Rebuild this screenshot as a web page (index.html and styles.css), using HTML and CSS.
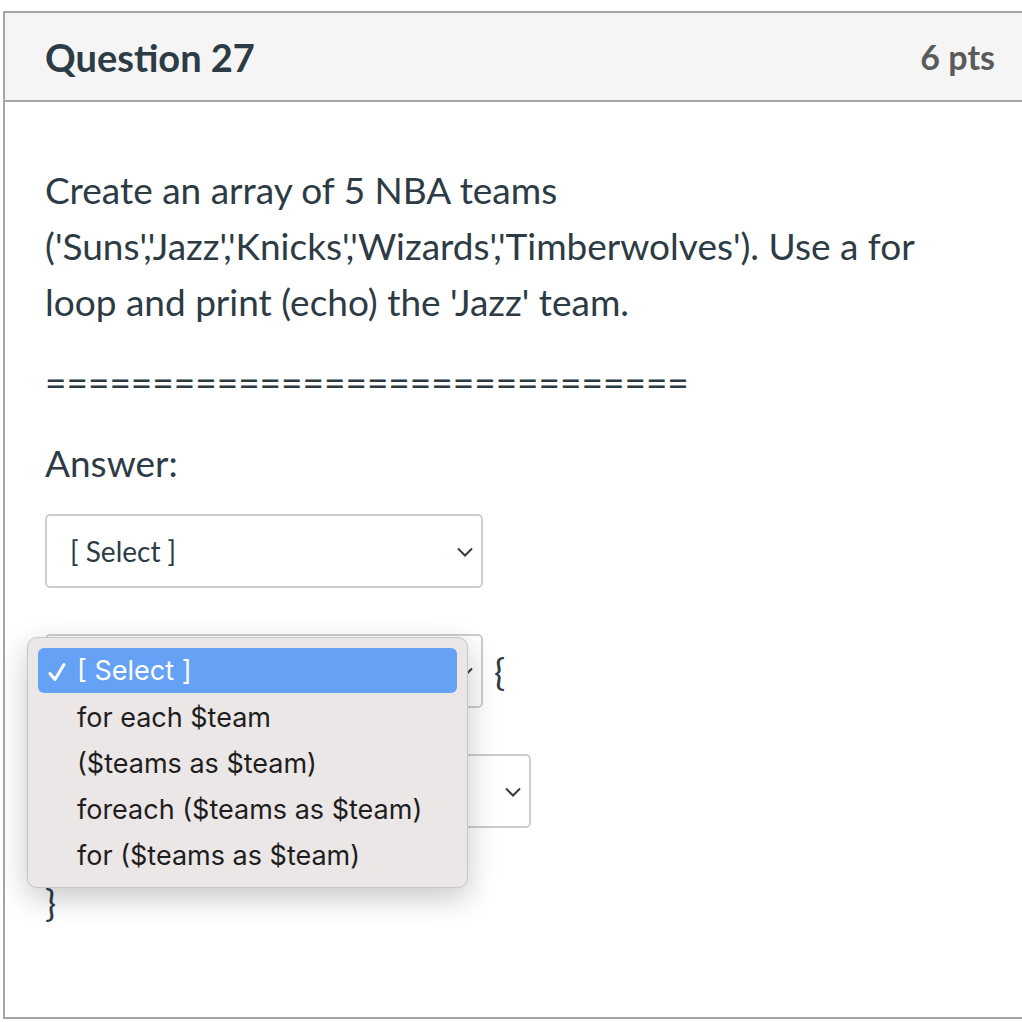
FILE: index.html
```html
<!DOCTYPE html>
<html>
<head>
  <title>Question 27</title>
  <link rel="stylesheet" href="styles.css">
</head>
<body>
  <div class="question">
    <div class="question-header">
      <span class="question-name">Question 27</span>
      <span class="question-points">6 pts</span>
    </div>

    <div class="question-body">
      <p>Create an array of 5 NBA teams ('Suns','Jazz','Knicks','Wizards','Timberwolves'). Use a for loop and print (echo) the 'Jazz' team.</p>
      <p class="divider">==============================</p>
      <p class="answer-label">Answer:</p>

      <div class="select-box">
        <span>[ Select ]</span>
        <svg class="chevron" width="16" height="10" viewBox="0 0 16 10"><path d="M1 1.5 L8 8.5 L15 1.5" fill="none" stroke="#2d3b45" stroke-width="2"/></svg>
      </div>

      <div class="code-row">
        <div class="select-box">
          <span>[ Select ]</span>
          <svg class="chevron" width="16" height="10" viewBox="0 0 16 10"><path d="M1 1.5 L8 8.5 L15 1.5" fill="none" stroke="#2d3b45" stroke-width="2"/></svg>
        </div>
        <span class="brace">{</span>
      </div>

      <div class="select-box indented">
        <span>[ Select ]</span>
        <svg class="chevron" width="16" height="10" viewBox="0 0 16 10"><path d="M1 1.5 L8 8.5 L15 1.5" fill="none" stroke="#2d3b45" stroke-width="2"/></svg>
      </div>

      <div class="brace close">}</div>

      <!-- open native dropdown menu -->
      <ul class="dropdown">
        <li class="selected">
          <svg class="check" width="18" height="20" viewBox="0 0 18 20"><path d="M2 11.5 L7 17.5 L16 2.5" fill="none" stroke="white" stroke-width="3" stroke-linecap="round" stroke-linejoin="round"/></svg>[ Select ]
        </li>
        <li>for each $team</li>
        <li>($teams as $team)</li>
        <li>foreach ($teams as $team)</li>
        <li>for ($teams as $team)</li>
      </ul>
    </div>
  </div>
</body>
</html>
```

FILE: styles.css
```css
body {
  margin: 0;
  font-family: Lato, 'Liberation Sans', sans-serif;
  color: #2d3b45;
  background: white;
  overflow: hidden;
}

.question {
  margin: 11px 0 0 3px;
  width: 1040px;
  height: 1008px;
  border: 2px solid #a5a5a5;
  border-right: none;
  box-sizing: border-box;
}

.question-header {
  background-color: #f5f5f5;
  border-bottom: 2px solid #a5a5a5;
  height: 89px;
  width: 1017px;
  box-sizing: border-box;
  display: flex;
  align-items: center;
  justify-content: space-between;
  padding: 0 27px 0 40px;
}

.question-name {
  font-size: 38px;
  font-weight: bold;
}

.question-points {
  font-size: 34px;
  font-weight: bold;
  color: #5a5a5a;
}

.question-body {
  position: relative;
  padding: 60px 0 0 40px;
}

.question-body p {
  margin: 0;
  font-size: 37px;
  line-height: 56px;
  width: 940px;
}

.question-body .divider {
  margin-top: 24px;
}

.question-body .answer-label {
  margin-top: 25px;
}

.select-box {
  width: 438px;
  height: 74px;
  margin-top: 23px;
  border: 2px solid #cdcdcd;
  border-radius: 5px;
  box-sizing: border-box;
  display: flex;
  align-items: center;
  justify-content: space-between;
  padding: 0 8px 0 23px;
  font-size: 28px;
}

.chevron {
  margin-top: 2px;
}

.code-row {
  display: flex;
  align-items: center;
  gap: 11px;
  margin-top: 46px;
}

.code-row .select-box {
  margin-top: 0;
}

.brace {
  font-size: 37px;
}

.select-box.indented {
  margin-top: 46px;
  margin-left: 48px;
}

.brace.close {
  margin-top: 47px;
  line-height: 56px;
}

.dropdown {
  position: absolute;
  left: 22px;
  top: 535px;
  width: 441px;
  height: 251px;
  margin: 0;
  padding: 10px 10px 0 10px;
  box-sizing: border-box;
  list-style: none;
  background: #ebe7e6;
  border: 1px solid #c9c5c4;
  border-radius: 10px;
  box-shadow: 0 10px 30px rgba(0, 0, 0, 0.22);
  font-family: Inter, Roboto, 'Liberation Sans', sans-serif;
  font-size: 27px;
  color: #1e1e1e;
}

.dropdown li {
  height: 46px;
  line-height: 46px;
  padding-left: 39px;
  position: relative;
}

.dropdown li.selected {
  background: #65a2f6;
  color: white;
  border-radius: 6px;
  height: 45px;
  line-height: 45px;
  margin-bottom: 2px;
}

.check {
  position: absolute;
  left: 10px;
  top: 14px;
}
```
